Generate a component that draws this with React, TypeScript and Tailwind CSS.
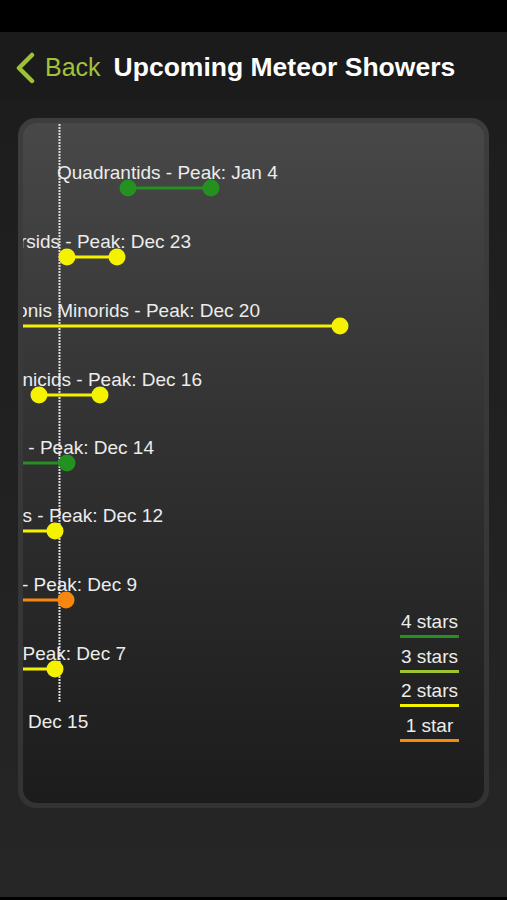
import React from 'react'

// chart coordinates are relative to the inner panel (462 x 680)
interface Shower {
  name: string
  color: string
  y: number // line y
  x1: number
  x2: number
  textEnd?: number
  textStart?: number
}

const GREEN = '#23901f'
const LIME = '#9ac52f'
const YELLOW = '#f5f200'
const ORANGE = '#f7870f'

const SHOWERS: Shower[] = [
  { name: 'Quadrantids - Peak: Jan 4', color: GREEN, y: 65, x1: 105, x2: 188, textStart: 34 },
  { name: 'Ursids - Peak: Dec 23', color: YELLOW, y: 134, x1: 44, x2: 94, textEnd: 169 },
  { name: 'Leonis Minorids - Peak: Dec 20', color: YELLOW, y: 203, x1: -120, x2: 317, textEnd: 238 },
  { name: 'Comae Berenicids - Peak: Dec 16', color: YELLOW, y: 272, x1: 16, x2: 77, textEnd: 180 },
  { name: 'Geminids - Peak: Dec 14', color: GREEN, y: 340, x1: -60, x2: 44, textEnd: 132 },
  { name: 'Sigma Hydrids - Peak: Dec 12', color: YELLOW, y: 408, x1: -60, x2: 32, textEnd: 141 },
  { name: 'Puppid-Velids - Peak: Dec 9', color: ORANGE, y: 477, x1: -60, x2: 43, textEnd: 115 },
  { name: 'Andromedids - Peak: Dec 7', color: YELLOW, y: 546, x1: -60, x2: 32, textEnd: 104 },
]

const LEGEND = [
  { label: '4 stars', color: GREEN },
  { label: '3 stars', color: LIME },
  { label: '2 stars', color: YELLOW },
  { label: '1 star', color: ORANGE },
]

const font = { fontFamily: '"Liberation Sans", Arial, sans-serif' }

function Chart() {
  return (
    <div className="relative h-full w-full overflow-hidden rounded-[14px] bg-gradient-to-b from-[#484848] via-[#303030] to-[#1c1c1c]">
      <svg className="absolute inset-0" width="462" height="680">
        {/* today marker */}
        <line x1="36.5" y1="1" x2="36.5" y2="579" stroke="#dcdcdc" strokeWidth="2" strokeDasharray="2 1" />
        {SHOWERS.map(s => (
          <g key={s.name}>
            <line x1={s.x1} y1={s.y} x2={s.x2} y2={s.y} stroke={s.color} strokeWidth="3" />
            <circle cx={s.x1} cy={s.y} r="8.5" fill={s.color} />
            <circle cx={s.x2} cy={s.y} r="8.5" fill={s.color} />
          </g>
        ))}
      </svg>

      {SHOWERS.map(s =>
        s.textStart !== undefined ? (
          <span
            key={s.name}
            className="absolute whitespace-nowrap text-[19px] leading-none text-[#ececec]"
            style={{ left: s.textStart, top: s.y - 25 }}>
            {s.name}
          </span>
        ) : (
          <div
            key={s.name}
            className="absolute flex justify-end whitespace-nowrap text-[19px] leading-none text-[#ececec]"
            style={{ right: 462 - (s.textEnd ?? 0), top: s.y - 25, width: 400 }}>
            {s.name}
          </div>
        )
      )}

      <span className="absolute left-[5px] top-[589px] text-[19px] leading-none text-[#ececec]">Dec 15</span>

      {/* legend */}
      <div className="absolute left-[377px] top-[489px] flex w-[59px] flex-col gap-[8.5px]">
        {LEGEND.map(l => (
          <div key={l.label} className="flex flex-col items-center">
            <span className="whitespace-nowrap text-[19px] leading-none text-[#ececec]">{l.label}</span>
            <div className="mt-[4px] h-[3px] w-full" style={{ background: l.color }} />
          </div>
        ))}
      </div>
    </div>
  )
}

export default function App() {
  return (
    <div className="flex h-[900px] w-[507px] flex-col bg-black" style={font}>
      <div className="h-[32px] shrink-0 bg-black" />
      <div className="flex h-[68px] shrink-0 items-center bg-[#1b1b1b] pl-[14px] pt-[3px]">
        <svg width="22" height="32" viewBox="0 0 22 32" className="mr-[9px]">
          <path d="M18 3 L5 16 L18 29" fill="none" stroke="#9dc23a" strokeWidth="4.5" strokeLinecap="round" strokeLinejoin="round" />
        </svg>
        <span className="text-[25px] text-[#a3c23c]">Back</span>
        <span className="ml-[13px] text-[26.5px] font-bold text-white">Upcoming Meteor Showers</span>
      </div>
      <div className="flex flex-1 flex-col bg-gradient-to-b from-[#1d1d1d] to-[#262626] px-[18px] pt-[18px]">
        <div className="h-[690px] rounded-[18px] bg-gradient-to-b from-[#3d3d3d] to-[#333333] p-[5px]">
          <Chart />
        </div>
        <div className="flex-1" />
      </div>
      <div className="h-[3px] shrink-0 bg-black" />
    </div>
  )
}
